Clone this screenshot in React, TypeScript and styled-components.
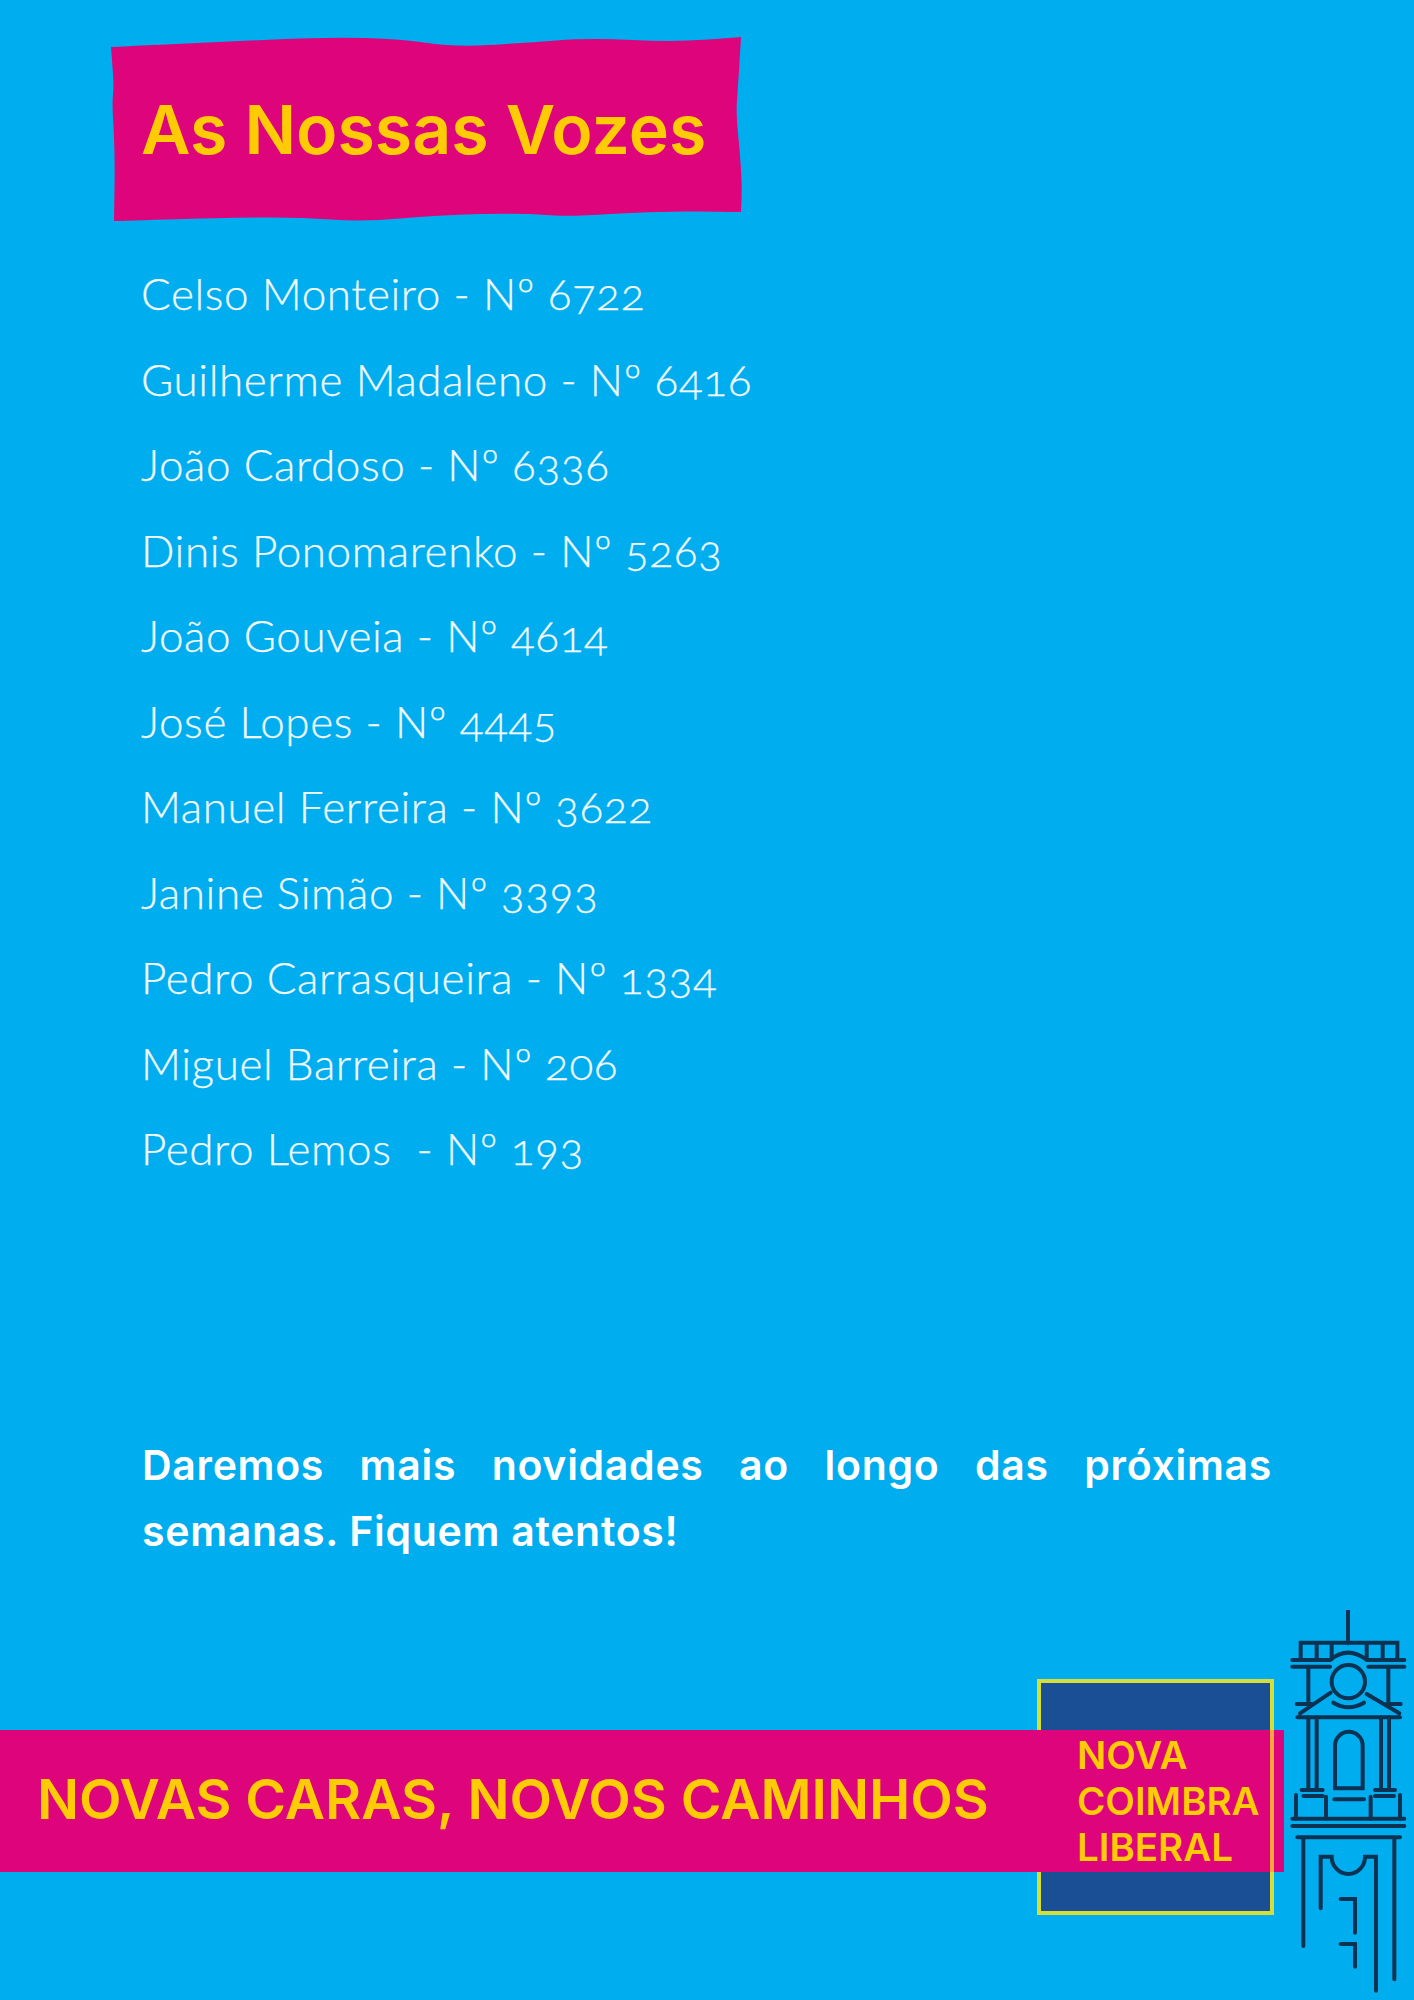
import React from "react";
import styled, { createGlobalStyle } from "styled-components";

const Global = createGlobalStyle`
  html, body { margin: 0; padding: 0; background: #00aeef; }
`;

const blobPoints: [number, number][] = [
  [1, 10], [1, 10], [110, 5], [218, 0], [292, 2], [344, 10], [414, 6], [479, 1], [565, 5], [631, 0], [631, 0],
  [628, 50], [626, 76], [630, 116], [632, 150], [631, 175], [631, 175],
  [544, 174], [457, 180], [414, 176], [327, 178], [253, 185], [188, 180], [110, 181], [4, 184], [4, 184],
  [5, 116], [2, 66], [4, 50],
];

const smooth = (pts: [number, number][]) => {
  const mid = (a: [number, number], b: [number, number]) => [(a[0] + b[0]) / 2, (a[1] + b[1]) / 2];
  const start = mid(pts[pts.length - 1], pts[0]);
  let d = `M${start[0]} ${start[1]}`;
  pts.forEach((p, i) => {
    const m = mid(p, pts[(i + 1) % pts.length]);
    d += ` Q${p[0]} ${p[1]} ${m[0]} ${m[1]}`;
  });
  return d + " Z";
};

const Page = styled.div`
  width: 1414px;
  height: 2000px;
  background: #00aeef;
  display: flex;
  flex-direction: column;
  padding-top: 37px;
  box-sizing: border-box;
  overflow: hidden;
  font-family: "Lato", "Liberation Sans", sans-serif;
`;

const Heading = styled.h1`
  box-sizing: border-box;
  width: 632px;
  height: 185px;
  margin: 0 0 0 110px;
  padding: 0 0 2px 31px;
  display: flex;
  align-items: center;
  background: #de047c;
  clip-path: path("${smooth(blobPoints)}");
  color: #ffcb05;
  font-family: "Inter", "Lato", sans-serif;
  font-size: 68px;
  font-weight: 600;
  white-space: nowrap;
`;

const Voters = styled.ul`
  list-style: none;
  margin: 29px 0 0 141px;
  padding: 0;
`;

const Voter = styled.li`
  height: 85.5px;
  line-height: 85.5px;
  color: #f2fbff;
  font-size: 44px;
  font-weight: 300;
  letter-spacing: 0.6px;
  font-variant-numeric: oldstyle-nums;
  -webkit-text-stroke: 0.25px #f2fbff;
  white-space: pre;
`;

const Notice = styled.p`
  width: 1130px;
  margin: 240px 0 0 142px;
  color: #fff;
  font-family: "Inter", "Lato", sans-serif;
  font-size: 41px;
  font-weight: 600;
  letter-spacing: 0.7px;
  line-height: 66px;
  text-align: justify;
`;

const Footer = styled.footer`
  margin-top: 46px;
  display: grid;
  grid-template-columns: 1037px 237px 10px 130px;
  grid-template-rows: 69px 51px 142px 43px 85px;
`;

const Band = styled.div`
  grid-column: 1 / 4;
  grid-row: 3;
  background: #de047c;
  z-index: 1;
  display: flex;
  align-items: center;
  padding: 0 0 5px 37px;
  color: #ffcb05;
  font-family: "Inter", "Lato", sans-serif;
  font-size: 55.4px;
  font-weight: 600;
  white-space: nowrap;
`;

const Frame = styled.div`
  grid-column: 2;
  grid-row: 2 / 5;
  background: #1a4f96;
  border: 4px solid #d6de3a;
`;

const FrameEdge = styled.div`
  grid-column: 2;
  grid-row: 3;
  justify-self: end;
  width: 4px;
  background: #ffa63a;
  z-index: 2;
`;

const Brand = styled.div`
  grid-column: 2;
  grid-row: 3;
  z-index: 3;
  display: flex;
  flex-direction: column;
  justify-content: center;
  padding-left: 40px;
  color: #ffcb05;
  font-family: "Inter", "Lato", sans-serif;
  font-size: 38.5px;
  font-weight: 600;
  line-height: 46px;
`;

const Tower = styled.svg`
  grid-column: 4;
  grid-row: 1 / 6;
  width: 130px;
  height: 390px;
  fill: none;
  stroke: #0a3252;
  stroke-width: 12;
  stroke-linecap: round;
`;

const names = [
  "Celso Monteiro - Nº 6722",
  "Guilherme Madaleno - Nº 6416",
  "João Cardoso - Nº 6336",
  "Dinis Ponomarenko - Nº 5263",
  "João Gouveia - Nº 4614",
  "José Lopes - Nº 4445",
  "Manuel Ferreira - Nº 3622",
  "Janine Simão - Nº 3393",
  "Pedro Carrasqueira - Nº 1334",
  "Miguel Barreira - Nº 206",
  "Pedro Lemos  - Nº 193",
];

export default function App() {
  return (
    <Page>
      <Global />
      <Heading>As Nossas Vozes</Heading>
      <Voters>
        {names.map((n) => (
          <Voter key={n}>{n}</Voter>
        ))}
      </Voters>
      <Notice>Daremos mais novidades ao longo das próximas semanas. Fiquem atentos!</Notice>
      <Footer>
        <Frame />
        <Band>NOVAS CARAS, NOVOS CAMINHOS</Band>
        <FrameEdge />
        <Brand>
          <span>NOVA</span>
          <span>COIMBRA</span>
          <span>LIBERAL</span>
        </Brand>
        <Tower viewBox="852 90 390 1170">
          <path d="M1044 92V190M902 238V188H1192V238M950 188V238M995 188V238M1100 188V238M1148 188V238" />
          <path d="M877 240H990Q1044 196 1100 240H1213M877 260H990M1105 260H1213" />
          <circle cx="1045" cy="305" r="50" />
          <path d="M925 260V375M1165 260V375M890 372H935M1160 372H1202" />
          <path d="M992 338L900 400M1100 342L1198 400M892 412H1200M1000 368Q1045 395 1092 368" />
          <path d="M925 412V625M950 412V625M1143 412V625M1167 412V625" />
          <path d="M1005 625V497A41.5 41.5 0 0 1 1088 497V625Z" />
          <path d="M905 630H968M910 648H968M1125 630H1185M1125 648H1182M1003 658H1092" />
          <path d="M888 645V716M978 650V716M1112 650V716M1200 645V716" />
          <path d="M877 716H1213M877 738H1213M892 772H1200M910 772V1098M1183 772V1198" />
          <path d="M962 985V830H995A50 52 0 0 0 1095 830H1128V1232" />
          <path d="M1022 957H1065V1058M1022 1092H1065V1160" />
        </Tower>
      </Footer>
    </Page>
  );
}
